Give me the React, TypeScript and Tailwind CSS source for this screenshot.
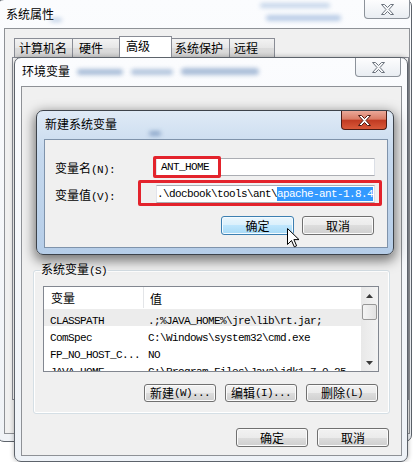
import type { ReactNode } from 'react';

const Cn = ({ children, className = '' }: { children: ReactNode; className?: string }) => (
  <span className={`font-['Noto_Sans_CJK_SC',sans-serif] text-[12px] leading-[14px] ${className}`}>{children}</span>
);

const Mo = ({ children, className = '' }: { children: ReactNode; className?: string }) => (
  <span className={`font-['Liberation_Mono',monospace] text-[11px] leading-[14px] tracking-[-0.6px] ${className}`}>
    {children}
  </span>
);

const CloseX = ({ active }: { active?: boolean }) => (
  <svg width="13" height="11" viewBox="0 0 13 11">
    <path
      d="M0.5 0.5h3l3 3 3-3h3l-4.5 5 4.5 5h-3l-3-3-3 3h-3l4.5-5z"
      fill={active ? '#ffffff' : '#f6f7f9'}
      stroke={active ? '#4a1a12' : '#6c737d'}
      strokeWidth="1"
      strokeLinejoin="round"
    />
  </svg>
);

const CloseBtn = ({ active, className = '' }: { active?: boolean; className?: string }) => (
  <div
    className={`flex h-[19px] w-[46px] shrink-0 items-center justify-center self-start rounded-b-[4px] border border-t-0 ${
      active
        ? 'border-[#4b1c15] bg-[linear-gradient(#eaa999,#d97c66_45%,#c13b22_52%,#d9593a)]'
        : 'border-[#8c929a] bg-[linear-gradient(#fdfdfe,#e9edf2)]'
    } ${className}`}
  >
    <CloseX active={active} />
  </div>
);

const Btn = ({ children, className }: { children: ReactNode; className: string }) => (
  <div className={`flex shrink-0 items-center justify-center rounded-[3px] border text-black ${className}`}>{children}</div>
);

const gray =
  'border-[#707070] bg-[linear-gradient(#f2f2f2,#ebebeb_50%,#dddddd_50%,#cfcfcf)] shadow-[inset_0_0_0_1px_#fbfbfb]';
const blue =
  'border-[#3c7fb1] bg-[linear-gradient(#eaf6fd,#d9f0fc_50%,#bee6fd_50%,#a7d9f5)] shadow-[inset_0_0_0_1px_#f4fbff]';

const tabs = [
  { name: '计算机名', w: 'w-[59px]', pl: 'pl-[4px]' },
  { name: '硬件', w: 'w-[48px]', pl: 'pl-[6px]' },
  { name: '高级', w: 'w-[53px]', pl: 'pl-[6px]', active: true },
  { name: '系统保护', w: 'w-[59px]', pl: 'pl-[3px]' },
  { name: '远程', w: 'w-[46px]', pl: 'pl-[4px]' },
];

const rows = [
  ['CLASSPATH', '.;%JAVA_HOME%\\jre\\lib\\rt.jar;'],
  ['ComSpec', 'C:\\Windows\\system32\\cmd.exe'],
  ['FP_NO_HOST_C...', 'NO'],
  ['JAVA_HOME', 'C:\\Program Files\\Java\\jdk1.7.0_25'],
];

const Blur = ({ className }: { className: string }) => (
  <div className={`pointer-events-none absolute rounded-full blur-[2px] ${className}`} />
);

export default function App() {
  return (
    <div className="relative h-[462px] w-[416px] overflow-hidden bg-white text-black">
      {/* 系统属性 */}
      <div className="absolute left-[-3px] top-[-1px] flex h-[443px] w-[415px] flex-col rounded-[7px] border border-[#5d636b] bg-[linear-gradient(#fbfcfe,#f0f3f7)]">
        <div className="relative flex h-[28px] items-center justify-between pl-[8px]">
          <Blur className="left-[262px] top-[3px] h-[5px] w-[70px] bg-[#c6d6ea]" />
          <Blur className="left-[268px] top-[15px] h-[6px] w-[75px] bg-[#b9cce6]" />
          <Blur className="left-[52px] top-[18px] h-[4px] w-[12px] bg-[#c0d0e6]" />
          <Cn className="relative">系统属性</Cn>
          <CloseBtn className="mr-[1px]" />
        </div>
        <div className="mb-[7px] ml-[6px] mr-[1px] flex-1 border border-[#8e9196] bg-[#f0f0f0] pl-[7px] pt-[7px]">
          <div className="flex h-[21px] items-end pl-[2px]">
            {tabs.map((t, i) => (
              <div
                key={t.name}
                className={`flex items-center border border-b-0 border-[#898c95] ${t.w} ${t.pl} ${i > 0 ? '-ml-px' : ''} ${
                  t.active ? 'relative z-10 h-[21px] bg-white pb-[2px]' : 'h-[19px] bg-[linear-gradient(#f3f3f3,#e6e6e6_50%,#dcdcdc_50%,#d6d6d6)]'
                }`}
              >
                <Cn>{t.name}</Cn>
              </div>
            ))}
          </div>
          <div className="h-[343px] border border-[#898c95] bg-white" />
        </div>
      </div>

      {/* 环境变量 */}
      <div className="absolute left-[14px] top-[57px] flex h-[405px] w-[394px] flex-col rounded-[7px] border border-[#5d636b] bg-[linear-gradient(#fbfcfe,#eef2f7)] shadow-[0_0_5px_rgba(0,0,0,0.3)]">
        <div className="relative flex h-[28px] items-center justify-between pb-[2px] pl-[7px]">
          <Blur className="left-[62px] top-[11px] h-[6px] w-[46px] bg-[#a9bdd8]" />
          <Blur className="left-[116px] top-[11px] h-[6px] w-[42px] bg-[#b3c5dd]" />
          <Blur className="left-[166px] top-[10px] h-[7px] w-[78px] bg-[#a9bdd8]" />
          <Cn className="relative">环境变量</Cn>
          <CloseBtn className="mr-[6px]" />
        </div>
        <div className="mb-[5px] ml-[6px] mr-[5px] flex h-[370px] flex-col border border-[#8e9196] bg-[#f0f0f0]">
          <div className="h-[175px] pl-[21px] pt-[17px]">
            <Mo>Administrator </Mo>
            <Cn>的用户变量</Cn>
            <Mo>(U)</Mo>
          </div>
          <fieldset className="ml-[11px] w-[357px] rounded-[3px] border border-[#d5dfe5] pb-[11px] shadow-[inset_0_0_0_1px_#ffffff]">
            <legend className="ml-[6px] px-[1px] leading-[12px]">
              <Cn className="leading-[12px]">系统变量</Cn>
              <Mo className="leading-[12px]">(S)</Mo>
            </legend>
            <div className="ml-[9px] mt-[8px] flex h-[86px] w-[336px] overflow-hidden border border-[#828790] bg-white">
              <div className="flex flex-1 flex-col">
                <div className="flex h-[21px] shrink-0 items-center">
                  <div className="flex h-full w-[100px] items-center border-r border-[#e3e5e8] pl-[7px]">
                    <Cn>变量</Cn>
                  </div>
                  <div className="pl-[6px]">
                    <Cn>值</Cn>
                  </div>
                </div>
                <div className="pt-[1px]">
                  {rows.map(([k, v], i) => (
                    <div key={k} className={`flex h-[17px] shrink-0 items-center ${i === 0 ? 'bg-[#ececec]' : ''}`}>
                      <div className="w-[100px] pl-[6px]">
                        <Mo>{k}</Mo>
                      </div>
                      <div className="whitespace-pre pl-[4px]">
                        <Mo>{v}</Mo>
                      </div>
                    </div>
                  ))}
                </div>
              </div>
              <div className="flex w-[17px] flex-col bg-[linear-gradient(90deg,#e8e8e8,#f3f3f3)]">
                <div className="flex h-[17px] items-center justify-center">
                  <svg width="7" height="4" viewBox="0 0 7 4">
                    <path d="M0 4L3.5 0L7 4z" fill="#3a3a3a" />
                  </svg>
                </div>
                <div className="mx-[1px] h-[16px] rounded-[2px] border border-[#979797] bg-[linear-gradient(90deg,#f4f4f4,#e2e2e2)]" />
                <div className="flex-1" />
                <div className="flex h-[17px] items-center justify-center">
                  <svg width="7" height="4" viewBox="0 0 7 4">
                    <path d="M0 0L7 0L3.5 4z" fill="#3a3a3a" />
                  </svg>
                </div>
              </div>
            </div>
            <div className="mt-[12px] flex justify-end gap-[9px] pr-[11px]">
              <Btn className={`h-[18px] w-[72px] ${gray}`}>
                <Cn>新建</Cn>
                <Mo>(W)...</Mo>
              </Btn>
              <Btn className={`h-[18px] w-[72px] ${gray}`}>
                <Cn>编辑</Cn>
                <Mo>(I)...</Mo>
              </Btn>
              <Btn className={`h-[18px] w-[72px] ${gray}`}>
                <Cn>删除</Cn>
                <Mo>(L)</Mo>
              </Btn>
            </div>
          </fieldset>
          <div className="mt-[14px] flex justify-end gap-[9px] pr-[12px]">
            <Btn className={`h-[19px] w-[72px] ${gray}`}>
              <Cn>确定</Cn>
            </Btn>
            <Btn className={`h-[19px] w-[72px] ${gray}`}>
              <Cn>取消</Cn>
            </Btn>
          </div>
        </div>
      </div>

      {/* 新建系统变量 */}
      <div className="absolute left-[36px] top-[110px] flex h-[145px] w-[358px] flex-col rounded-[7px] border border-[#3d434b] bg-[linear-gradient(#dfeaf6,#c6d9ee_30%,#b5cde8)] shadow-[0_4px_12px_2px_rgba(0,0,0,0.5)]">
        <div className="relative flex h-[28px] items-center justify-between pb-[2px] pl-[8px]">
          <Blur className="left-[112px] top-[20px] h-[5px] w-[12px] bg-[#8fa9cb]" />
          <Cn className="relative">新建系统变量</Cn>
          <CloseBtn active className="mr-[6px]" />
        </div>
        <div className="relative mb-[6px] ml-[7px] mr-[5px] h-[109px] border border-[#7f93ab] bg-[#f0f0f0] pt-[18px]">
          <div className="flex h-[18px] items-center">
            <div className="w-[111px] pl-[10px]">
              <Cn>变量名</Cn>
              <Mo>(N):</Mo>
            </div>
            <div className="flex h-[18px] w-[219px] items-center border border-[#abadb3] border-l-[#e2e3ea] border-r-[#dbdfe6] bg-white pl-[4px]">
              <Mo>ANT_HOME</Mo>
            </div>
          </div>
          <div className="mt-[9px] flex h-[18px] items-center">
            <div className="w-[111px] pl-[10px]">
              <Cn>变量值</Cn>
              <Mo>(V):</Mo>
            </div>
            <div className="flex h-[18px] w-[219px] items-center overflow-hidden whitespace-pre border border-[#abadb3] border-l-[#e2e3ea] border-r-[#dbdfe6] bg-white">
              <Mo>.\docbook\tools\ant\</Mo>
              <Mo className="bg-[#3399ff] text-white">apache-ant-1.8.4</Mo>
            </div>
          </div>
          <div className="mt-[13px] flex justify-end gap-[8px] pr-[13px]">
            <Btn className={`h-[19px] w-[73px] ${blue}`}>
              <Cn>确定</Cn>
            </Btn>
            <Btn className={`h-[19px] w-[72px] ${gray}`}>
              <Cn>取消</Cn>
            </Btn>
          </div>
          <div className="absolute left-[108px] top-[16px] h-[22px] w-[68px] rounded-[2px] border-[3px] border-[#e3232c]" />
          <div className="absolute left-[93px] top-[40px] h-[26px] w-[244px] rounded-[2px] border-[3px] border-[#e3232c]" />
        </div>
      </div>

      {/* cursor */}
      <svg className="absolute left-[287px] top-[228px]" width="13" height="20" viewBox="0 0 13 20">
        <path d="M0.5 0.5V16.5L4.5 12.5L7.3 18.8L9.6 17.8L6.9 11.6H12z" fill="#fff" stroke="#000" strokeWidth="1" strokeLinejoin="round" />
      </svg>
    </div>
  );
}
